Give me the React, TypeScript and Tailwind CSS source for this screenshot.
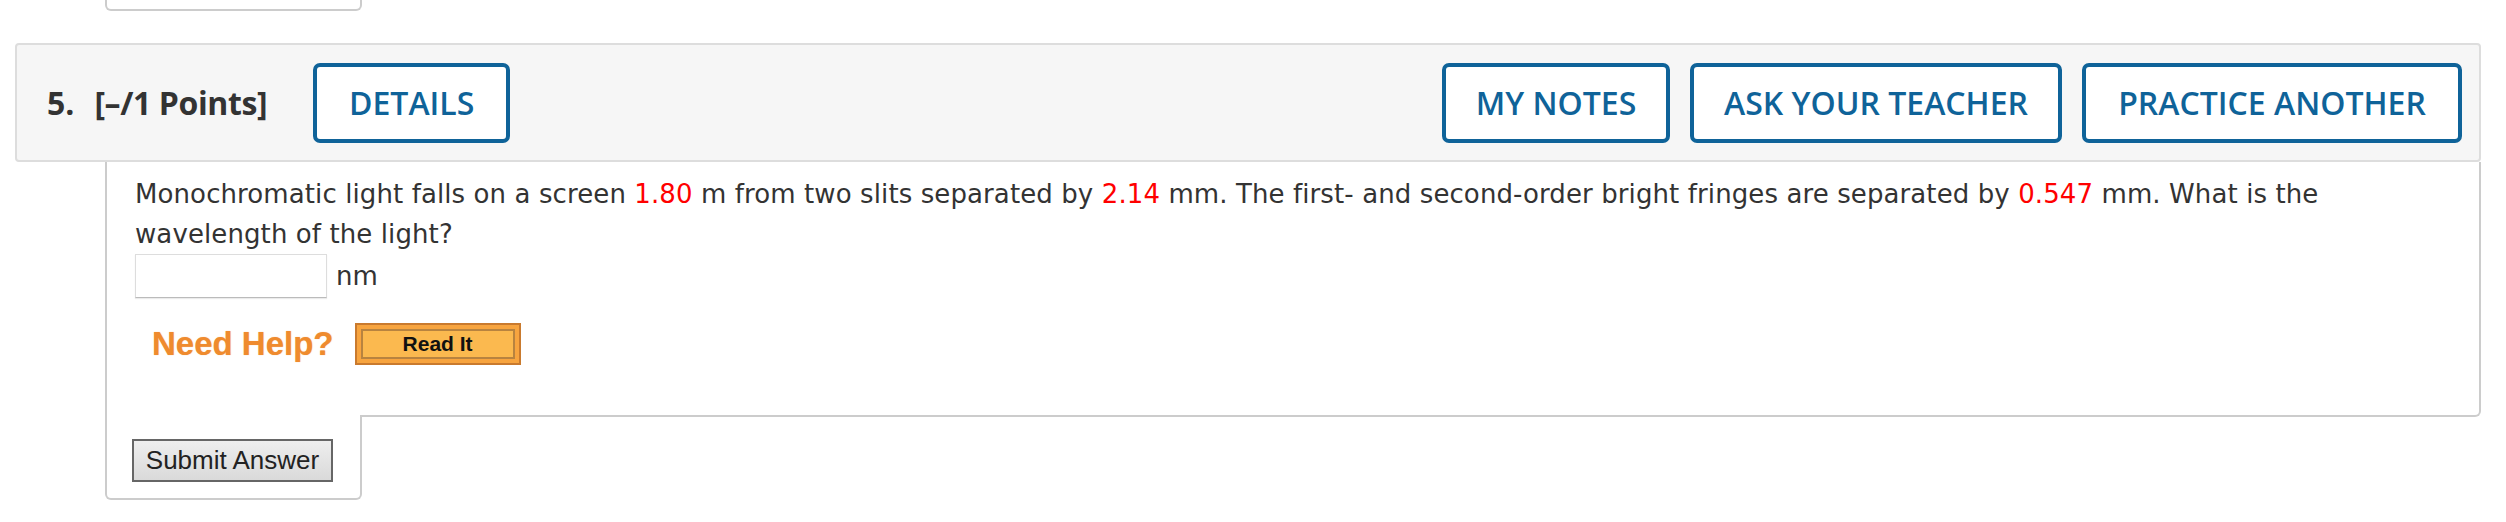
export default function App() {
  // question header buttons, fixed widths read off the screenshot
  const rightButtons = [
    { label: 'MY NOTES', w: 'w-[228px]' },
    { label: 'ASK YOUR TEACHER', w: 'w-[372px]' },
    { label: 'PRACTICE ANOTHER', w: 'w-[380px]' },
  ];

  return (
    <div className="min-h-screen w-[2506px] bg-white">
      <div className="pl-[15px] w-[2481px]">
        {/* bottom of the previous question's submit tab */}
        <div className="ml-[90px] h-[11px] w-[257px] rounded-b-[6px] border-x-2 border-b-2 border-[#cccccc]" />

        {/* question header */}
        <div className="mt-[32px] flex h-[119px] items-center justify-between rounded-[4px] border-2 border-[#dddddd] bg-[#f6f6f6] pl-[30px] pr-[17px] font-['Open_Sans',sans-serif]">
          <div className="flex items-center">
            <span className="text-[32px] font-bold text-[#333333]">5.</span>
            <span className="ml-[20px] text-[32px] font-bold tracking-[-0.4px] text-[#333333]">[–/1 Points]</span>
            <button className="ml-[46px] flex h-[80px] w-[197px] items-center justify-center rounded-[7px] border-[4px] border-[#0f6399] bg-white text-[32px] font-semibold text-[#0f6399]">
              DETAILS
            </button>
          </div>
          <div className="flex items-center gap-[20px]">
            {rightButtons.map((b) => (
              <button
                key={b.label}
                className={`${b.w} flex h-[80px] items-center justify-center rounded-[7px] border-[4px] border-[#0f6399] bg-white text-[32px] font-semibold text-[#0f6399]`}
              >
                {b.label}
              </button>
            ))}
          </div>
        </div>

        {/* question body */}
        <div className="ml-[90px] rounded-br-[6px] border-x-2 border-b-2 border-[#cccccc] pb-[46px] pl-[28px] pr-[140px] pt-[12px] font-['DejaVu_Sans',sans-serif] text-[#333333]">
          <p className="text-[26px] leading-[40px] tracking-[0.1px]">
            Monochromatic light falls on a screen <span className="text-[#ff0000]">1.80</span> m from two slits separated by{' '}
            <span className="text-[#ff0000]">2.14</span> mm. The first- and second-order bright fringes are separated by{' '}
            <span className="text-[#ff0000]">0.547</span> mm. What is the wavelength of the light?
          </p>
          <div className="flex items-center gap-[9px]">
            <input
              type="text"
              className="h-[44px] w-[192px] border border-[#dddddd] border-b-[#bbbbbb] bg-white shadow-[0_1px_1px_rgba(0,0,0,0.08)] outline-none"
            />
            <span className="text-[26px]">nm</span>
          </div>
          <div className="mt-[21px] flex items-center pl-[17px]">
            <span className="font-['Liberation_Sans',sans-serif] text-[33px] font-bold text-[#ef8b2e] [text-shadow:0_0_1px_rgba(238,132,40,0.6)]">
              Need Help?
            </span>
            <button className="ml-[21px] flex h-[42px] w-[166px] items-center justify-center border-2 border-[#c97a2e] bg-[#f7a43f] p-[4px]">
              <span className="flex h-full w-full items-center justify-center border-2 border-[#b8833f] bg-[#fbb94f] font-['Liberation_Sans',sans-serif] text-[21px] font-bold text-[#111111]">
                Read It
              </span>
            </button>
          </div>
        </div>

        {/* submit tab */}
        <div className="relative -mt-[2px] ml-[90px] w-[257px] rounded-b-[6px] border-x-2 border-b-2 border-[#cccccc] bg-white pb-[16px] pl-[25px] pt-[24px]">
          <button className="h-[43px] w-[201px] border-2 border-[#666666] bg-gradient-to-b from-[#eeeeee] to-[#dadada] font-['Liberation_Sans',sans-serif] text-[26px] text-[#222222]">
            Submit Answer
          </button>
        </div>
      </div>
    </div>
  );
}
